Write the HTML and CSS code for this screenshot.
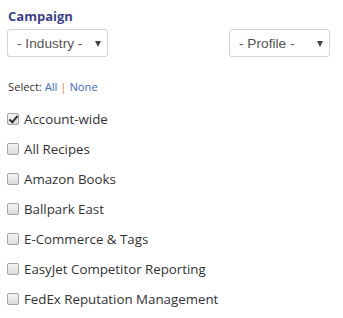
FILE: index.html
```html
<!DOCTYPE html>
<html>
<head>
	<meta charset="utf-8">
	<title>Campaign filter</title>
	<link rel="stylesheet" href="styles.css">
</head>
<body>
<main class="panel">
	<h4 class="title">Campaign</h4>

	<div class="filters">
		<span class="select-wrap">
			<select class="select-industry">
				<option>- Industry -</option>
			</select>
		</span>
		<span class="select-wrap">
			<select class="select-profile">
				<option>- Profile -</option>
			</select>
		</span>
	</div>

	<div class="select-links">
		Select: <a href="#">All</a> <span class="sep">|</span> <a href="#">None</a>
	</div>

	<ul class="campaigns">
		<li><label><input type="checkbox" checked> Account-wide</label></li>
		<li><label><input type="checkbox"> All Recipes</label></li>
		<li><label><input type="checkbox"> Amazon Books</label></li>
		<li><label><input type="checkbox"> Ballpark East</label></li>
		<li><label><input type="checkbox"> E-Commerce &amp; Tags</label></li>
		<li><label><input type="checkbox"> EasyJet Competitor Reporting</label></li>
		<li><label><input type="checkbox"> FedEx Reputation Management</label></li>
	</ul>
</main>
</body>
</html>
```

FILE: styles.css
```css
body {
	margin: 0;
	background-color: #fff;
	color: #333;
	font-family: "Open Sans", sans-serif;
}

.panel {
	padding: 6px 13px 0 7px;
}

.title {
	margin: 0 0 0 1px;
	font-size: 13px;
	font-weight: 700;
	line-height: 20px;
	color: #3d3f88;
}

.filters {
	display: flex;
	justify-content: space-between;
	margin-top: 3px;
}

.select-wrap {
	position: relative;
	display: inline-block;
}

.select-wrap::after {
	content: "";
	position: absolute;
	right: 7px;
	top: 12px;
	border-left: 3.5px solid transparent;
	border-right: 3.5px solid transparent;
	border-top: 6px solid #444;
	pointer-events: none;
}

select {
	-webkit-appearance: none;
	appearance: none;
	display: block;
	width: 101px;
	height: 28px;
	padding: 0 0 0 9px;
	border: 1px solid #d4d4d4;
	border-radius: 3px;
	background: #fff;
	color: #555;
	font-family: "Liberation Sans", Arial, sans-serif;
	font-size: 13.7px;
}

.select-links {
	margin: 22px 0 0 1px;
	font-size: 11.2px;
	line-height: 16px;
	color: #333;
}

.select-links a {
	color: #3a6dc0;
	text-decoration: none;
}

.sep {
	color: #d6844f;
}

.campaigns {
	list-style: none;
	margin: 12px 0 0 0;
	padding: 0;
}

.campaigns li {
	height: 30px;
}

.campaigns label {
	display: flex;
	align-items: center;
	gap: 5px;
	height: 24px;
	font-size: 13.3px;
	color: #333;
}

.campaigns input {
	-webkit-appearance: none;
	appearance: none;
	width: 12px;
	height: 12px;
	margin: 0;
	border: 1px solid #a3a3a3;
	border-radius: 2px;
	background: linear-gradient(#f4f4f4, #dcdcdc);
	position: relative;
}

.campaigns input:checked::after {
	content: "";
	position: absolute;
	left: 3px;
	top: 0px;
	width: 3px;
	height: 7px;
	border: solid #333;
	border-width: 0 2px 2px 0;
	transform: rotate(40deg);
}
```
